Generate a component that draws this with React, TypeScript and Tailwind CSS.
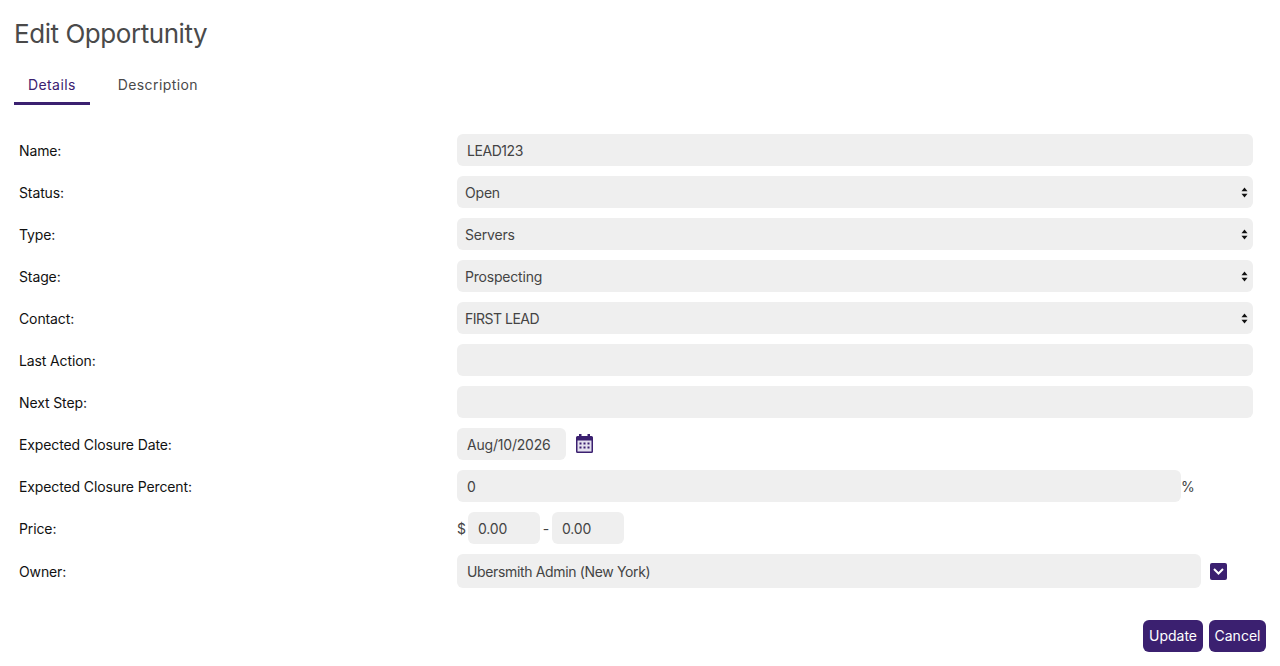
import { useState } from "react";

const font = "font-['Inter','Noto_Sans',sans-serif]";
const field = "h-8 rounded-md bg-[#efefef] text-[14px] tracking-[-0.2px] text-[#444] outline-none";

function Row({ label, children, className = "h-8" }: { label: string; children: React.ReactNode; className?: string }) {
  return (
    <div className={`flex items-center ${className}`}>
      <label className="w-[443px] pl-[5px] text-[14px] tracking-[-0.12px] text-[#111]">{label}</label>
      <div className="flex min-w-0 flex-1 items-center">{children}</div>
    </div>
  );
}

function Select({ value, options, className = "" }: { value: string; options: string[]; className?: string }) {
  const [current, setCurrent] = useState(value);
  return (
    <div className="relative w-[796px]">
      <select
        value={current}
        onChange={(e) => setCurrent(e.target.value)}
        className={`${field} w-full appearance-none pl-2 pr-6 ${className}`}
      >
        {options.map((o) => (
          <option key={o}>{o}</option>
        ))}
      </select>
      <svg viewBox="0 0 7 11" className="pointer-events-none absolute right-[5px] top-[10.5px] h-[11px] w-[7px]" fill="#111">
        <path d="M3.5 0.5 6.5 4.2H0.5Z" />
        <path d="M3.5 10.5 0.5 6.8H6.5Z" />
      </svg>
    </div>
  );
}

export default function App() {
  const [tab, setTab] = useState("Details");

  return (
    <div className={`${font} h-[666px] w-[1280px] overflow-hidden bg-white px-[14px] pt-[16px]`}>
      <h1 className="h-[36px] text-[26px] leading-[36px] font-normal tracking-[-0.45px] text-[#4a4a4a]">Edit Opportunity</h1>

      <div className="mt-[16px] flex gap-[14px]">
        {["Details", "Description"].map((t) => (
          <button
            key={t}
            onClick={() => setTab(t)}
            className={`h-[37px] border-b-[3px] px-[14px] pb-[2px] text-[14px] tracking-[0.4px] ${
              tab === t ? "border-[#3b2070] text-[#3b2070]" : "border-transparent text-[#4a4a4a]"
            }`}
          >
            {t}
          </button>
        ))}
      </div>

      <div className="mt-[29px] flex flex-col gap-[10px]">
        <Row label="Name:">
          <input defaultValue="LEAD123" className={`${field} w-[796px] px-[10px] tracking-[-0.45px]`} />
        </Row>
        <Row label="Status:">
          <Select value="Open" options={["Open", "Closed"]} />
        </Row>
        <Row label="Type:">
          <Select value="Servers" options={["Servers", "Hosting"]} />
        </Row>
        <Row label="Stage:">
          <Select value="Prospecting" options={["Prospecting", "Qualified"]} />
        </Row>
        <Row label="Contact:">
          <Select value="FIRST LEAD" options={["FIRST LEAD"]} className="tracking-[-0.5px]" />
        </Row>
        <Row label="Last Action:">
          <input className={`${field} w-[796px] px-[10px]`} />
        </Row>
        <Row label="Next Step:">
          <input className={`${field} w-[796px] px-[10px]`} />
        </Row>
        <Row label="Expected Closure Date:">
          <input defaultValue="Aug/10/2026" className={`${field} w-[109px] px-[10px]`} />
          <svg viewBox="0 0 17 19" className="mb-[2px] ml-[10px] h-[19px] w-[17px]" fill="#3b2070">
            <path d="M3 0h2.5v2h6V0H14v2h1.5A1.5 1.5 0 0 1 17 3.5v14a1.5 1.5 0 0 1-1.5 1.5h-14A1.5 1.5 0 0 1 0 17.500v-14A1.5 1.5 0 0 1 1.500 2H3Z" />
            <rect x="1.500" y="6.500" width="14" height="11" fill="#e4e0ee" />
            <g fill="#3b2070">
              <rect x="3.500" y="8.500" width="2" height="2" />
              <rect x="7.500" y="8.500" width="2" height="2" />
              <rect x="11.500" y="8.500" width="2" height="2" />
              <rect x="3.500" y="12.500" width="2" height="2" />
              <rect x="7.500" y="12.500" width="2" height="2" />
              <rect x="11.500" y="12.500" width="2" height="2" />
            </g>
          </svg>
        </Row>
        <Row label="Expected Closure Percent:">
          <input defaultValue="0" className={`${field} w-[724px] px-[10px]`} />
          <span className="text-[14px] tracking-[-0.5px] text-[#444]">%</span>
        </Row>
        <Row label="Price:">
          <span className="w-[11px] text-[14px] text-[#444]">$</span>
          <input defaultValue="0.00" className={`${field} w-[72px] px-[10px]`} />
          <span className="w-[12px] text-center text-[14px] text-[#444]">-</span>
          <input defaultValue="0.00" className={`${field} w-[72px] px-[10px]`} />
        </Row>
        <Row label="Owner:" className="h-[34px]">
          <input defaultValue="Ubersmith Admin (New York)" className={`${field} h-[34px] w-[744px] px-[10px] tracking-[-0.35px]`} />
          <button className="ml-[9px] flex h-[17px] w-[17px] items-center justify-center rounded-[2px] bg-[#3b2070]">
            <svg viewBox="0 0 11 7" className="h-[7px] w-[11px]" fill="none" stroke="#fff" strokeWidth="2">
              <path d="M1 1l4.500 4.500L10 1" />
            </svg>
          </button>
        </Row>
      </div>

      <div className="mt-[32px] flex justify-end gap-[6px]">
        <button className="h-8 w-[60px] rounded-md bg-[#3b2070] pb-[1px] text-[14px] text-white">Update</button>
        <button className="h-8 w-[57px] rounded-md bg-[#3b2070] pb-[1px] text-[14px] text-white">Cancel</button>
      </div>
    </div>
  );
}
